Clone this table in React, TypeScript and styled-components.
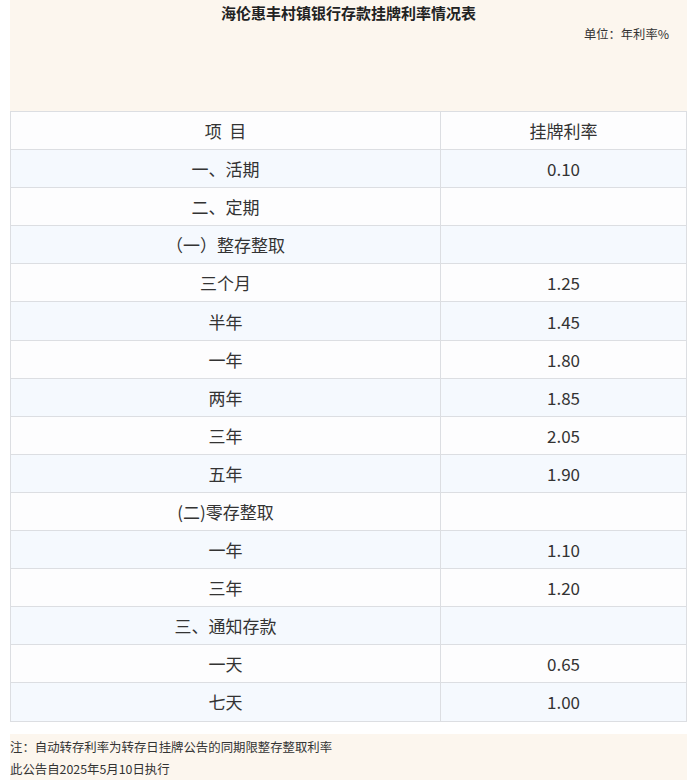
import React from "react";
import styled, { createGlobalStyle } from "styled-components";

const Global = createGlobalStyle`
  html, body { margin: 0; padding: 0; background: #ffffff; }
  body { font-family: "Noto Sans CJK SC", "Noto Sans", sans-serif; color: #333; }
`;

const Page = styled.div`
  width: 697px;
  padding: 0 10px;
  box-sizing: border-box;
`;

const Head = styled.header`
  background: #fcf6ee;
  height: 111px;
  display: flex;
  flex-direction: column;
  padding: 2px 18px 0 0;
  box-sizing: border-box;
`;

const Title = styled.h1`
  margin: 0;
  font-size: 15px;
  line-height: 22px;
  font-weight: bold;
  text-align: center;
  color: #222;
  padding-left: 18px;
`;

const Unit = styled.div`
  font-size: 12.3px;
  line-height: 20px;
  text-align: right;
  color: #333;
  margin-top: 0px;
`;

const Table = styled.table`
  width: 677px;
  border-collapse: collapse;
  table-layout: fixed;
  border: 1px solid #dcdee2;
`;

const Row = styled.tr<{ $alt: boolean }>`
  background: ${(p) => (p.$alt ? "#f5f9fe" : "#fdfdfe")};
`;

const Cell = styled.td`
  border: 1px solid #dcdee2;
  height: 37.1px;
  padding: 0;
  text-align: center;
  vertical-align: middle;
  font-size: 17px;
  color: #333;
`;

const Notes = styled.footer`
  margin-top: 12px;
  background: #fcf6ee;
  padding: 2px 0 3px;
  font-size: 12.4px;
  line-height: 22px;
  color: #333;
`;

const rows: [string, string][] = [
  ["一、活期", "0.10"],
  ["二、定期", ""],
  ["（一）整存整取", ""],
  ["三个月", "1.25"],
  ["半年", "1.45"],
  ["一年", "1.80"],
  ["两年", "1.85"],
  ["三年", "2.05"],
  ["五年", "1.90"],
  ["(二)零存整取", ""],
  ["一年", "1.10"],
  ["三年", "1.20"],
  ["三、通知存款", ""],
  ["一天", "0.65"],
  ["七天", "1.00"],
];

export default function App() {
  return (
    <Page>
      <Global />
      <Head>
        <Title>海伦惠丰村镇银行存款挂牌利率情况表</Title>
        <Unit>单位：年利率%</Unit>
      </Head>
      <Table>
        <colgroup>
          <col style={{ width: "430px" }} />
          <col />
        </colgroup>
        <tbody>
          <Row $alt={false}>
            <Cell>项&nbsp;&nbsp;目</Cell>
            <Cell>挂牌利率</Cell>
          </Row>
          {rows.map(([k, v], i) => (
            <Row key={i} $alt={i % 2 === 0}>
              <Cell>{k}</Cell>
              <Cell>{v}</Cell>
            </Row>
          ))}
        </tbody>
      </Table>
      <Notes>
        <div>注：自动转存利率为转存日挂牌公告的同期限整存整取利率</div>
        <div>此公告自2025年5月10日执行</div>
      </Notes>
    </Page>
  );
}
